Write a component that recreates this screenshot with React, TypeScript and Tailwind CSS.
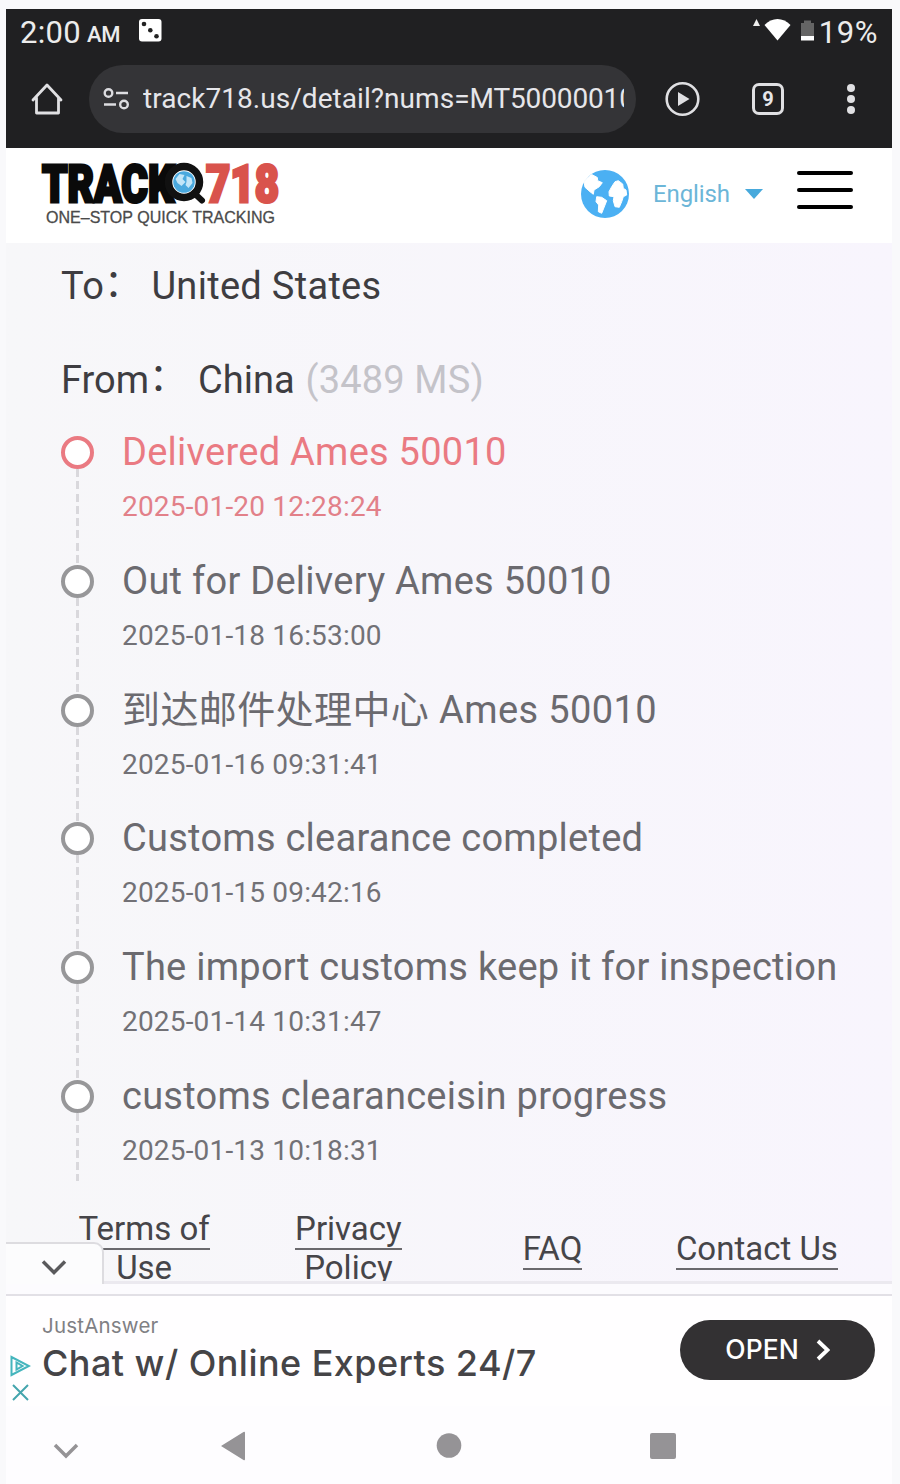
interface TrackEvent {
  title: string;
  time: string;
}

const EVENTS: TrackEvent[] = [
  { title: 'Delivered Ames 50010', time: '2025-01-20 12:28:24' },
  { title: 'Out for Delivery Ames 50010', time: '2025-01-18 16:53:00' },
  { title: '到达邮件处理中心 Ames 50010', time: '2025-01-16 09:31:41' },
  { title: 'Customs clearance completed', time: '2025-01-15 09:42:16' },
  { title: 'The import customs keep it for inspection', time: '2025-01-14 10:31:47' },
  { title: 'customs clearanceisin progress', time: '2025-01-13 10:18:31' },
];

const LINKS = ['Terms of Use', 'Privacy Policy', 'FAQ', 'Contact Us'];

function StatusBar() {
  return (
    <div className="flex h-[46px] items-center pr-[14px] pl-[14px] text-[#ececec]">
      <span className="text-[31px] leading-none tracking-[0.3px]">2:00</span>
      <span className="mt-[5px] ml-[6px] text-[22px] leading-none font-medium tracking-[-0.4px]">AM</span>
      <svg className="mb-[3px] ml-[19px] h-[23px] w-[23px]" viewBox="0 0 23 23" aria-hidden>
        <rect width="22.5" height="22.5" rx="3" fill="#fff" />
        <circle cx="5" cy="5" r="2.3" fill="#222" />
        <circle cx="11.3" cy="11.3" r="2.3" fill="#222" />
        <circle cx="17.5" cy="17.3" r="2.3" fill="#222" />
      </svg>
      <span className="flex-1" />
      <svg className="mb-[4px] h-[24px] w-[66px]" viewBox="0 0 66 24" aria-hidden>
        <path d="M3.500 1 7 8H0Z" fill="#eee" />
        <path d="M24.500 22.500 11.500 7C15 3 20 1 24.500 1S34 3 37.500 7Z" fill="#fff" />
        <path d="M48 5h3V2.500h7V5h3v13H48Z" fill="#656565" />
        <path d="M48 18h13v4.500H48Z" fill="#fff" />
      </svg>
      <span className="text-[31px] leading-none tracking-[0.6px]">19%</span>
    </div>
  );
}

function AddressBar() {
  return (
    <div className="flex h-[88px] items-center text-[#e6e6ea]">
      <svg className="ml-[25px] h-[34px] w-[32px]" viewBox="0 0 32 34" fill="none" aria-hidden>
        <path
          d="M2 18 16 3l14 15M5.500 15.500v15.500h22V15.500"
          stroke="#e0e0e3"
          strokeWidth="2.800"
          strokeLinejoin="round"
          strokeLinecap="round"
        />
      </svg>
      <div className="ml-[26px] flex h-[68px] w-[547px] items-center rounded-full bg-[#343437] pr-[12px] pl-[14px]">
        <svg
          className="h-[24px] w-[27px] shrink-0"
          viewBox="0 0 27 24"
          fill="none"
          stroke="#dcdce0"
          strokeWidth="2.400"
          aria-hidden
        >
          <circle cx="5.500" cy="6" r="3.800" />
          <path d="M13 6h12M1 17.500h12" />
          <circle cx="21" cy="17.500" r="3.800" />
        </svg>
        <span className="ml-[13px] min-w-0 flex-1 overflow-hidden text-[28px] leading-[36px] tracking-[0.05px] whitespace-nowrap">
          track718.us/detail?nums=<span className="tracking-[-0.15px]">MT50000010</span>
        </span>
      </div>
      <svg className="ml-[28px] h-[36px] w-[36px]" viewBox="0 0 36 36" fill="none" aria-hidden>
        <circle cx="18.500" cy="18" r="15.800" stroke="#e0e0e3" strokeWidth="2.600" />
        <path d="M14 11v14L25.500 18Z" fill="#e0e0e3" />
      </svg>
      <span className="ml-[52px] flex h-[32px] w-[32px] items-center justify-center rounded-[7px] border-3 border-[#e0e0e3] text-[20px] leading-none font-bold">
        9
      </span>
      <span className="ml-[63px] flex flex-col gap-[3px]">
        <span className="size-[8px] rounded-full bg-[#e0e0e3]" />
        <span className="size-[8px] rounded-full bg-[#e0e0e3]" />
        <span className="size-[8px] rounded-full bg-[#e0e0e3]" />
      </span>
    </div>
  );
}

function Logo() {
  return (
    <svg className="h-[70px] w-[244px] overflow-visible" viewBox="0 0 244 70" aria-label="TRACK718">
      <g fontFamily="Roboto, sans-serif" fontWeight="900" fontSize="52" strokeWidth="3">
        <text x="1" y="43" textLength="132" lengthAdjust="spacingAndGlyphs" fill="#0a0a0a" stroke="#0a0a0a">
          TRACK
        </text>
        <text x="165" y="43" textLength="73" lengthAdjust="spacingAndGlyphs" fill="#d9534c" stroke="#d9534c">
          718
        </text>
      </g>
      <circle cx="143" cy="23" r="15.500" fill="#fff" stroke="#111" strokeWidth="7.500" />
      <path d="m153 34 8 7.500" stroke="#111" strokeWidth="6" strokeLinecap="round" />
      <circle cx="143" cy="23" r="10.800" fill="#4aa9de" />
      <path d="m134.500 20 4-5 5 1-2 4 3 3-4 4-4-3ZM145.500 17l5 2 1 5-4 5-3-3 1-3Z" fill="#c3e6f8" />
      <text
        x="5"
        y="63.500"
        textLength="229"
        fontFamily="Liberation Sans, sans-serif"
        fontSize="17"
        lengthAdjust="spacingAndGlyphs"
        fill="#4a4a4a"
        stroke="#4a4a4a"
        strokeWidth="0.300"
      >
        ONE–STOP QUICK TRACKING
      </text>
    </svg>
  );
}

function SiteHeader() {
  return (
    <header className="flex h-[95px] items-center bg-white pb-[3px] pl-[35px]">
      <Logo />
      <svg className="ml-[296px] h-[48px] w-[48px]" viewBox="0 0 48 48" aria-hidden>
        <circle cx="24" cy="24" r="24" fill="#4bb0f3" />
        <path
          d="m5.700 8.500 5-4 5.600 3 .4 3.200 4.600 2-3 4-5.300 3.300-.7 4.300-3.300-2.600-5-4.400-1-5.600ZM15.700 26.700l5 .6 5 3.400-1.700 4.300-3.300 8.300-3.400-1.600.4-6.700-2.700-3.300ZM34 11.700l3.300-1 4.400 3.300.6 4.300 2.700 1.700.7 5-3.400 1.700-1.600 5-2.400 5.600-4.300-.6-1.700-6 .7-4-4.700-.7-.3-4.300 2.700-5Z"
          fill="#fff"
          stroke="#fff"
          strokeWidth="1"
          strokeLinejoin="round"
        />
      </svg>
      <span className="ml-[24px] text-[24px] leading-none tracking-[-0.1px] text-[#6cb6d8]">English</span>
      <svg className="ml-[15px] h-[10px] w-[18px]" viewBox="0 0 18 10" aria-hidden>
        <path d="M0 0h18L9 10Z" fill="#47a9dc" />
      </svg>
      <span className="mb-[8px] ml-[34px] flex w-[56px] flex-col gap-[13px]">
        <span className="h-[4px] rounded-full bg-black" />
        <span className="h-[4px] rounded-full bg-black" />
        <span className="h-[4px] rounded-full bg-black" />
      </span>
    </header>
  );
}

function Timeline() {
  return (
    <ul className="mt-[34px]">
      {EVENTS.map((e, i) => {
        const latest = i === 0;
        const last = i === EVENTS.length - 1;
        return (
          <li key={e.time} className={`flex ${last ? 'h-[101px]' : 'h-[128.8px]'}`}>
            <div className="flex w-[33px] shrink-0 flex-col items-center">
              <span
                className={`size-[33px] shrink-0 rounded-full border-[4.5px] bg-white ${
                  latest ? 'border-[#ea7a82]' : 'border-[#979799]'
                }`}
              />
              <span className="w-[3px] flex-1 bg-[repeating-linear-gradient(to_bottom,#d9d8dc_0_8px,transparent_8px_12.3px)]" />
            </div>
            <div className="-mt-[6px] ml-[28px] whitespace-nowrap">
              <p
                className={`text-[38px] leading-[44px] ${i === 2 ? 'tracking-[0.4px]' : 'tracking-[0.26px]'} ${
                  latest ? 'text-[#ea7a82]' : 'text-[#6b6a6f]'
                }`}
              >
                {e.title}
              </p>
              <p
                className={`mt-[17px] text-[28px] leading-[32px] tracking-[0.18px] ${
                  latest ? 'text-[#e28089]' : 'text-[#727176]'
                }`}
              >
                {e.time}
              </p>
            </div>
          </li>
        );
      })}
    </ul>
  );
}

function FooterLinks() {
  return (
    <div className="-mr-[1px] grid h-[99px] grid-cols-4 items-center pt-[28px] pr-[34px] pl-[36px] text-center">
      {LINKS.map((label) => (
        <div key={label} className="px-[30px] text-[33px] leading-[39.5px] text-[#464549] last:px-0">
          <a className="border-b-2 border-[#6a696d]">{label}</a>
        </div>
      ))}
    </div>
  );
}

function AdBanner() {
  return (
    <div className="relative h-[125px] shrink-0 border-t-3 border-[#ebe9ef] bg-[#fcfbfe] pt-[10px]">
      <span className="absolute -top-[42px] left-0 flex h-[42px] w-[98px] items-center justify-center rounded-tr-[10px] border-t-2 border-r-2 border-[#dddce0] bg-[#fcfcfd] pt-[6px]">
        <svg className="h-[16px] w-[26px]" viewBox="0 0 26 16" fill="none" aria-hidden>
          <path d="m2 2.500 11 11 11-11" stroke="#5a5a5c" strokeWidth="3.500" />
        </svg>
      </span>
      <div className="flex h-[112px] border-t-2 border-[#e2e0e6] bg-[#fffeff]">
        <div className="flex w-[36px] flex-col pt-[59px] pl-[4px]">
          <svg className="h-[22px] w-[21px]" viewBox="0 0 21 22" fill="none" stroke="#45b5bd" strokeWidth="2" aria-hidden>
            <path d="M1.500 2v18L19 11Z" />
            <path d="M6.500 7.500v7l6-3.500Z" />
          </svg>
          <svg className="mt-[7px] ml-[2px] h-[17px] w-[17px]" viewBox="0 0 17 17" stroke="#45a5ad" strokeWidth="2" aria-hidden>
            <path d="m1 1 15 15M16 1 1 16" />
          </svg>
        </div>
        <div className="pt-[17px] whitespace-nowrap">
          <p className="font-[Inter] text-[20.5px] leading-[26px] tracking-[0.2px] text-[#808084]">JustAnswer</p>
          <p className="mt-[2px] font-[Inter] text-[36px] leading-[44px] font-medium tracking-[0.45px] text-[#454447]">
            Chat w/ Online Experts 24/7
          </p>
        </div>
        <button className="mt-[24px] mr-[17px] ml-auto flex h-[60px] w-[195px] items-center justify-center rounded-full bg-[#333133] font-[Inter] text-[26.5px] font-medium text-white">
          OPEN
          <svg className="ml-[17px] h-[22px] w-[14px]" viewBox="0 0 14 22" fill="none" aria-hidden>
            <path d="m2 2 9.500 9L2 20" stroke="#fff" strokeWidth="3.800" />
          </svg>
        </button>
      </div>
    </div>
  );
}

function NavBar() {
  return (
    <svg className="h-[78px] w-full shrink-0" viewBox="0 0 886 78" fill="#959396" aria-hidden>
      <path d="m49 39 11 11 11-11" fill="none" stroke="#959396" strokeWidth="3.500" />
      <path d="M215 40 237.500 26q1.500-1 1.500 1v26q0 2-1.500 1Z" />
      <circle cx="443" cy="39.500" r="12.300" />
      <rect x="644" y="27" width="26" height="26" rx="2" />
    </svg>
  );
}

export default function App() {
  return (
    <div className="h-[1484px] w-[900px] overflow-hidden bg-[#f9f9fb] pt-[9px] pl-[6px] font-[Roboto,'Noto_Sans_CJK_SC',sans-serif]">
      <div className="flex h-full w-[886px] flex-col bg-[#fefdff]">
        <div className="h-[139px] shrink-0 bg-[#202022]">
          <StatusBar />
          <AddressBar />
        </div>
        <SiteHeader />
        <main className="h-[1038px] shrink-0 bg-linear-to-r from-[#f7f7f9] to-[#f8f5fd]">
          <div className="pt-[21px] pl-[55px] text-[38px] leading-[44px] text-[#3e3d41]">
            <p className="flex tracking-[0.3px]">
              <span>
                To<span className="relative -top-[3px]">：</span>
              </span>
              <span className="ml-[9px]">United States</span>
            </p>
            <p className="mt-[50px] flex">
              <span>
                From<span className="relative -top-[3px]">：</span>
              </span>
              <span className="ml-[11px]">China</span>
              <span className="ml-[11px] tracking-[0.15px] text-[#c4c3c9]">(3489 MS)</span>
            </p>
            <Timeline />
          </div>
          <FooterLinks />
        </main>
        <AdBanner />
        <NavBar />
      </div>
    </div>
  );
}
